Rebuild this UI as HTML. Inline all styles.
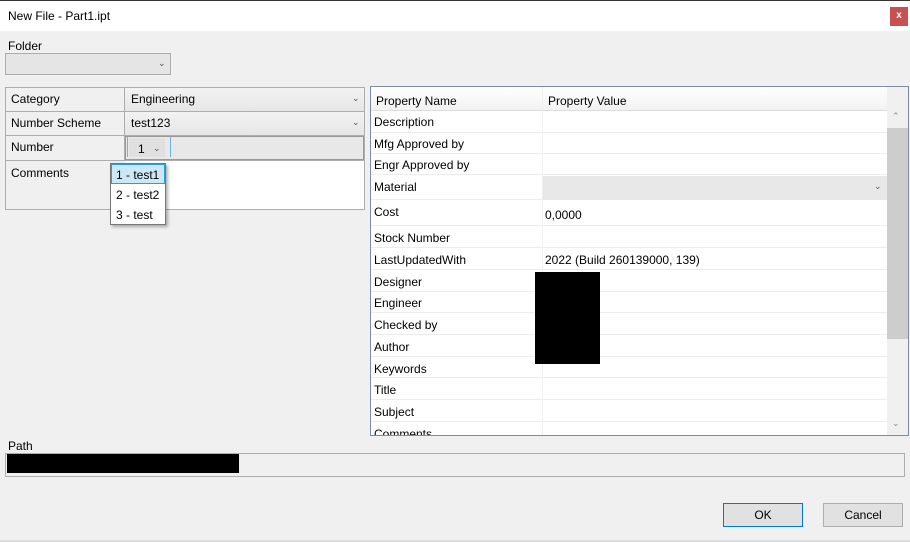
<!DOCTYPE html>
<html><head><style>
*{box-sizing:border-box;margin:0;padding:0}
body{width:910px;height:542px;background:#f0f0f0;font-family:"Liberation Sans",sans-serif;font-size:12px;color:#000;position:relative;overflow:hidden}
.a{position:absolute}
.chev{position:absolute;font-size:9px;color:#555}
.row{position:absolute;left:0;width:516px;border-bottom:1px solid #ececec}
.row span{position:absolute;left:3px}
</style></head><body>
<div class="a" style="left:0;top:0;width:910px;height:1px;background:#333"></div>
<div class="a" style="left:0;top:1px;width:910px;height:30px;background:#fff"></div>
<div class="a" style="left:8px;top:9px">New File - Part1.ipt</div>
<div class="a" style="left:890px;top:7px;width:18px;height:19px;background:#c75050;color:#fff;font-weight:bold;font-size:10px;text-align:center;line-height:18px">x</div>

<div class="a" style="left:8px;top:39px">Folder</div>
<div class="a" style="left:5px;top:53px;width:166px;height:22px;border:1px solid #adadad;background:#e5e5e5"></div>
<div class="chev" style="left:158px;top:58px">&#8964;</div>

<!-- left table -->
<div class="a" style="left:5px;top:87px;width:360px;height:123px;border:1px solid #adadad;background:#f0f0f0"></div>
<div class="a" style="left:124px;top:87px;width:1px;height:73px;background:#adadad"></div>
<div class="a" style="left:5px;top:111px;width:360px;height:1px;background:#adadad"></div>
<div class="a" style="left:5px;top:135px;width:360px;height:1px;background:#adadad"></div>
<div class="a" style="left:5px;top:160px;width:360px;height:1px;background:#adadad"></div>
<div class="a" style="left:125px;top:88px;width:239px;height:23px;background:linear-gradient(#f2f2f2,#e6e6e6)"></div>
<div class="a" style="left:125px;top:112px;width:239px;height:23px;background:linear-gradient(#f2f2f2,#e6e6e6)"></div>
<div class="a" style="left:125px;top:136px;width:239px;height:24px;border:1px solid #999;background:#e8e8e8"></div>
<div class="a" style="left:125px;top:161px;width:239px;height:48px;background:#fff"></div>
<div class="a" style="left:11px;top:92px">Category</div>
<div class="a" style="left:131px;top:92px">Engineering</div>
<div class="chev" style="left:352px;top:93px">&#8964;</div>
<div class="a" style="left:11px;top:116px">Number Scheme</div>
<div class="a" style="left:131px;top:116px">test123</div>
<div class="chev" style="left:352px;top:117px">&#8964;</div>
<div class="a" style="left:11px;top:140px">Number</div>
<div class="a" style="left:127px;top:137px;width:1px;height:20px;background:#6cb4e4"></div>
<div class="a" style="left:129px;top:138px;width:36px;height:19px;background:#e0e0e0"></div>
<div class="a" style="left:138px;top:142px">1</div>
<div class="chev" style="left:153px;top:143px">&#8964;</div>
<div class="a" style="left:170px;top:137px;width:1px;height:20px;background:#6cb4e4"></div>
<div class="a" style="left:11px;top:166px">Comments</div>
<!-- popup -->
<div class="a" style="left:110px;top:163px;width:56px;height:62px;border:1px solid #777;background:#fff;box-shadow:2px 2px 3px rgba(0,0,0,.3)"></div>
<div class="a" style="left:111px;top:164px;width:54px;height:20px;background:#cce8f7;border:1px solid #26a0da"></div>
<div class="a" style="left:116px;top:168px">1 - test1</div>
<div class="a" style="left:116px;top:188px">2 - test2</div>
<div class="a" style="left:116px;top:208px">3 - test</div>

<!-- right grid -->
<div class="a" style="left:370px;top:86px;width:539px;height:350px;border:1px solid #7a8ca8;background:#fff;overflow:hidden">
 <div class="a" style="left:0;top:0;width:516px;height:24px;background:linear-gradient(#fff,#f2f2f2);border-bottom:1px solid #ddd"></div>
 <div class="a" style="left:171px;top:0;width:1px;height:350px;background:#eee"></div>
 <div class="a" style="left:5px;top:7px">Property Name</div>
 <div class="a" style="left:177px;top:7px">Property Value</div>
 <div class="a" style="left:516px;top:0;width:22px;height:350px;background:#f0f0f0"></div>
 <div class="a" style="left:516px;top:41px;width:21px;height:211px;background:#cdcdcd"></div>
 <div class="chev" style="left:521px;top:24px;color:#888">&#8963;</div>
 <div class="chev" style="left:521px;top:331px;color:#888">&#8964;</div>
 <div class="row" style="top:24px;height:22px"><span style="top:4px">Description</span></div>
 <div class="row" style="top:46px;height:21px"><span style="top:4px">Mfg Approved by</span></div>
 <div class="row" style="top:67px;height:21px"><span style="top:4px">Engr Approved by</span></div>
 <div class="row" style="top:88px;height:25px"><span style="top:5px">Material</span></div>
 <div class="a" style="left:172px;top:89px;width:344px;height:24px;background:#e8e8e8"></div>
 <div class="chev" style="left:503px;top:94px">&#8964;</div>
 <div class="row" style="top:113px;height:26px"><span style="top:5px">Cost</span></div>
 <div class="a" style="left:174px;top:121px">0,0000</div>
 <div class="row" style="top:139px;height:22px"><span style="top:5px">Stock Number</span></div>
 <div class="row" style="top:161px;height:22px"><span style="top:5px">LastUpdatedWith</span></div>
 <div class="a" style="left:174px;top:166px">2022 (Build 260139000, 139)</div>
 <div class="row" style="top:183px;height:22px"><span style="top:5px">Designer</span></div>
 <div class="row" style="top:205px;height:21px"><span style="top:4px">Engineer</span></div>
 <div class="row" style="top:226px;height:22px"><span style="top:5px">Checked by</span></div>
 <div class="row" style="top:248px;height:22px"><span style="top:5px">Author</span></div>
 <div class="row" style="top:270px;height:21px"><span style="top:5px">Keywords</span></div>
 <div class="row" style="top:291px;height:22px"><span style="top:5px">Title</span></div>
 <div class="row" style="top:313px;height:22px"><span style="top:5px">Subject</span></div>
 <div class="row" style="top:335px;height:22px"><span style="top:5px">Comments</span></div>
 <div class="a" style="left:164px;top:185px;width:65px;height:92px;background:#000"></div>
</div>

<div class="a" style="left:8px;top:439px">Path</div>
<div class="a" style="left:5px;top:453px;width:900px;height:24px;border:1px solid #adadad;background:#f0f0f0"></div>
<div class="a" style="left:7px;top:454px;width:232px;height:19px;background:#000"></div>

<div class="a" style="left:723px;top:503px;width:80px;height:24px;border:1px solid #0078d7;background:#e1e1e1;text-align:center;line-height:22px">OK</div>
<div class="a" style="left:823px;top:503px;width:80px;height:24px;border:1px solid #adadad;background:#e1e1e1;text-align:center;line-height:22px">Cancel</div>
<div class="a" style="left:0;top:540px;width:910px;height:2px;background:#ddd"></div>
</body></html>
